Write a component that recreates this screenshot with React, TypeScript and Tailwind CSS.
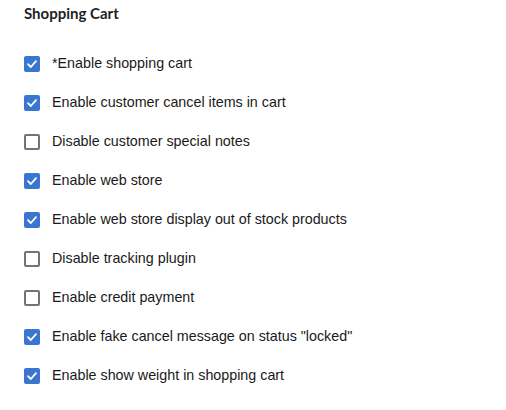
import React from "react";

interface OptionRow {
  label: string;
  checked: boolean;
}

const options: OptionRow[] = [
  { label: "*Enable shopping cart", checked: true },
  { label: "Enable customer cancel items in cart", checked: true },
  { label: "Disable customer special notes", checked: false },
  { label: "Enable web store", checked: true },
  { label: "Enable web store display out of stock products", checked: true },
  { label: "Disable tracking plugin", checked: false },
  { label: "Enable credit payment", checked: false },
  { label: 'Enable fake cancel message on status "locked"', checked: true },
  { label: "Enable show weight in shopping cart", checked: true },
];

const Checkbox = ({ checked }: { checked: boolean }) =>
  checked ? (
    <span className="flex h-4 w-4 items-center justify-center rounded-[2px] bg-[#3a76d0]">
      <svg width="12" height="12" viewBox="0 0 12 12" fill="none">
        <path
          d="M2 6.2 L4.8 9 L10 3.2"
          stroke="white"
          strokeWidth="1.8"
          strokeLinecap="round"
          strokeLinejoin="round"
        />
      </svg>
    </span>
  ) : (
    <span className="block h-4 w-4 rounded-[2px] border-2 border-[#737373] bg-white" />
  );

export default function App() {
  return (
    <div className="h-[410px] w-[506px] overflow-hidden bg-white">
      <div className="px-6 pt-[3px]">
        <h2 className="font-['Lato',sans-serif] text-[15px] leading-5 font-bold text-[#1f1f1f]">
          Shopping Cart
        </h2>
        <ul className="mt-[31px] flex flex-col gap-[19px]">
          {options.map((o) => (
            <li key={o.label} className="flex h-5 items-center gap-3">
              <Checkbox checked={o.checked} />
              <span className="font-['Liberation_Sans',Arial,sans-serif] text-[14.3px] text-[#1a1a1a]">
                {o.label}
              </span>
            </li>
          ))}
        </ul>
      </div>
    </div>
  );
}
